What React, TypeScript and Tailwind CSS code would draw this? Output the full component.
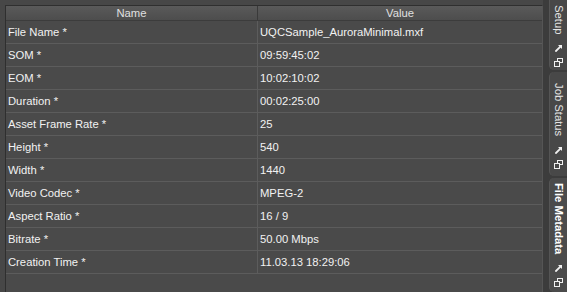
import React from "react";

const rows: [string, string][] = [
  ["File Name *", "UQCSample_AuroraMinimal.mxf"],
  ["SOM *", "09:59:45:02"],
  ["EOM *", "10:02:10:02"],
  ["Duration *", "00:02:25:00"],
  ["Asset Frame Rate *", "25"],
  ["Height *", "540"],
  ["Width *", "1440"],
  ["Video Codec *", "MPEG-2"],
  ["Aspect Ratio *", "16 / 9"],
  ["Bitrate *", "50.00 Mbps"],
  ["Creation Time *", "11.03.13 18:29:06"],
];

function PinIcon() {
  return (
    <svg width="8" height="8" viewBox="0 0 8 8" className="block">
      <path d="M1 7 L5 3" stroke="#f0f0f0" strokeWidth="1.8" strokeLinecap="square" />
      <path d="M3 1 L7 1 L7 5 Z" fill="#f0f0f0" />
    </svg>
  );
}

function RestoreIcon() {
  return (
    <svg width="9" height="9" viewBox="0 0 9 9" className="block">
      <rect x="3.5" y="0.5" width="5" height="4" fill="none" stroke="#f0f0f0" strokeWidth="1" />
      <rect x="0.5" y="3.5" width="5" height="5" fill="#4a4a4a" stroke="#f0f0f0" strokeWidth="1" />
    </svg>
  );
}

function Tab({ label, bold, className }: { label: string; bold?: boolean; className: string }) {
  return (
    <div className={"flex flex-col items-center rounded-l-[5px] border-l border-[#555] " + className}>
      <div
        className={"text-[11.25px] leading-[12px] text-[#e4e4e4] " + (bold ? "font-bold text-white" : "")}
        style={{ writingMode: "vertical-rl" }}
      >
        {label}
      </div>
      <div className="mt-[10px] ml-[1px]">
        <PinIcon />
      </div>
      <div className="mt-[6px]">
        <RestoreIcon />
      </div>
    </div>
  );
}

export default function App() {
  return (
    <div
      className="w-[567px] h-[292px] bg-[#474747] flex overflow-hidden"
      style={{ fontFamily: '"Liberation Sans", Arial, sans-serif' }}
    >
      <div className="w-[543px] h-full pt-[5px] pl-[5px]">
        <div className="h-full border-t border-l border-[#2f2f2f] border-r border-r-[#555] bg-[#4a4a4a] flex flex-col">
          <div className="flex h-[15px] bg-gradient-to-b from-[#5a5a5a] to-[#4d4d4d] border-b border-[#3c3c3c] text-[11.25px] leading-[14px] text-[#e0e0e0]">
            <div className="w-[252px] border-r border-[#3a3a3a] text-center">Name</div>
            <div className="flex-1 text-center">Value</div>
          </div>
          {rows.map(([n, v]) => (
            <div key={n} className="flex h-[23px] border-b border-[#5c5c5c] text-[11.25px] text-[#f2f2f2]">
              <div className="w-[252px] border-r border-[#5c5c5c] pl-[2px] flex items-center">{n}</div>
              <div className="flex-1 pl-[2px] flex items-center">{v}</div>
            </div>
          ))}
        </div>
      </div>
      <div className="flex-1 h-full bg-[#3c3c3c] pl-[6px] flex flex-col">
        <Tab label="Setup" className="h-[70px] pt-[5px] bg-[#484848] rounded-tl-none" />
        <div className="h-[2px]" />
        <Tab label="Job Status" className="h-[104px] pt-[11px] bg-[#484848]" />
        <div className="h-[2px]" />
        <Tab label="File Metadata" bold className="flex-1 pt-[5px] bg-[#4b4b4b]" />
      </div>
    </div>
  );
}
